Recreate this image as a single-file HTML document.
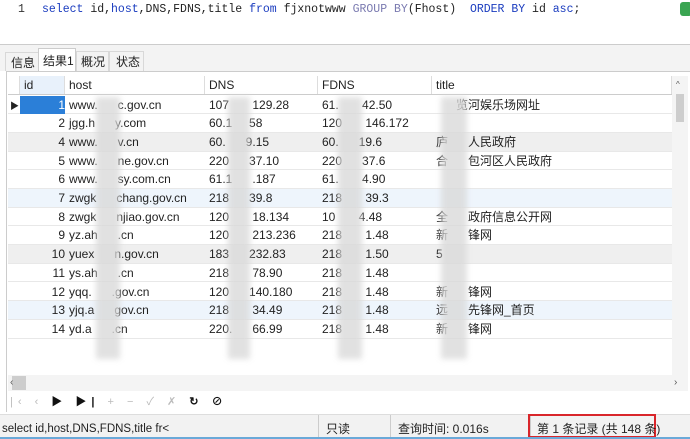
<!DOCTYPE html>
<html><head><meta charset="utf-8"><style>
*{margin:0;padding:0;box-sizing:border-box}
body{width:690px;height:439px;overflow:hidden;background:#fff;font-family:"Liberation Sans","Noto Sans CJK SC",sans-serif;font-size:12px;line-height:14px;color:#222;position:relative}
.a{position:absolute;white-space:nowrap}
.mono{font-family:"Liberation Mono",monospace;font-size:11.5px}
.row{position:absolute;left:8px;width:664px;height:18.7px;border-bottom:1px solid #e8e8e8}
.row span{position:absolute;top:2px;white-space:pre;line-height:14px}
.c{position:absolute;top:76px;height:19px;border-right:1px solid #ddd;background:#fff;padding:2px 0 0 4px}
.blur{position:absolute;background:#dadada;filter:blur(3px);opacity:.8}
</style></head><body>
<div class="a mono" style="left:18px;top:3px;color:#333">1</div>
<div class="a mono" style="left:42px;top:3px;color:#222;white-space:pre"><span style="color:#1a3cbf">select</span> id,<span style="color:#1a3cbf">host</span>,DNS,FDNS,title <span style="color:#1a3cbf">from</span> fjxnotwww <span style="color:#7a7ab0">GROUP BY</span>(Fhost)  <span style="color:#1a3cbf">ORDER BY</span> id <span style="color:#1a3cbf">asc</span>;</div>
<div class="a" style="left:680px;top:2px;width:12px;height:14px;background:#3aa552;border-radius:3px"></div>
<div class="a" style="left:0;top:44px;width:690px;height:1px;background:#ccc"></div>
<div class="a" style="left:0;top:45px;width:690px;height:26px;background:#f3f3f3"></div>
<div class="a" style="left:5px;top:52px;width:34px;height:19px;border:1px solid #d8d8d8;border-bottom:none;padding:3px 0 0 5px">信息</div>
<div class="a" style="left:38px;top:48px;width:38px;height:23px;background:#fff;border:1px solid #ccc;border-bottom:none;padding:5px 0 0 4px">结果1</div>
<div class="a" style="left:76px;top:51px;width:33px;height:20px;border:1px solid #d8d8d8;border-bottom:none;padding:3px 0 0 4px">概况</div>
<div class="a" style="left:109px;top:51px;width:35px;height:20px;border:1px solid #d8d8d8;border-bottom:none;padding:3px 0 0 6px">状态</div>
<div class="a" style="left:6px;top:71px;width:684px;height:1px;background:#ccc"></div>
<div class="a" style="left:6px;top:72px;width:1px;height:340px;background:#ccc"></div>
<div class="c" style="left:8px;width:12px;padding:0"></div>
<div class="c" style="left:20px;width:45px;background:#e8f1fb">id</div>
<div class="c" style="left:65px;width:140px">host</div>
<div class="c" style="left:205px;width:113px">DNS</div>
<div class="c" style="left:318px;width:114px">FDNS</div>
<div class="c" style="left:432px;width:240px">title</div>
<div class="a" style="left:8px;top:94px;width:664px;height:1px;background:#ccc"></div>
<div class="a" style="left:672px;top:76px;width:16px;height:300px;background:#f4f4f4"></div>
<div class="a" style="left:676px;top:94px;width:8px;height:28px;background:#cdcdcd"></div>
<div class="a" style="left:676px;top:78px;font-size:8px;color:#555">^</div>
<div id="rows"></div>
<script>
var d=[["1","www.      c.gov.cn","107       129.28","61.       42.50","      览河娱乐场网址"],
["2","jgg.h      y.com","60.1     58","120       146.172",""],
["4","www.      v.cn","60.      9.15","60.      19.6","庐      人民政府"],
["5","www.      ne.gov.cn","220      37.10","220      37.6","合      包河区人民政府"],
["6","www.      sy.com.cn","61.1      .187","61.       4.90",""],
["7","zwgk      chang.gov.cn","218      39.8","218       39.3",""],
["8","zwgk      njiao.gov.cn","120       18.134","10       4.48","全      政府信息公开网"],
["9","yz.ah      .cn","120       213.236","218       1.48","新      锋网"],
["10","yuex      n.gov.cn","183      232.83","218       1.50","5"],
["11","ys.ah      .cn","218       78.90","218       1.48",""],
["12","yqq.      .gov.cn","120      140.180","218       1.48","新      锋网"],
["13","yjq.a      gov.cn","218       34.49","218       1.48","远      先锋网_首页"],
["14","yd.a      .cn","220.      66.99","218       1.48","新      锋网"]];
var h="",xs=[57,69,209,322,436];
d.forEach(function(r,i){var t=95.5+i*18.7;var bg=i==2||i==8?"#efefef":(i==5||i==11?"#eef5fc":"#fff");
h+='<div class="row" style="top:'+t+'px;background:'+bg+'">';
if(i==0)h+='<div style="position:absolute;left:12px;top:0;width:45px;height:18px;background:#2b7fd8"></div><span style="left:2px;font-size:9px;top:3px">▶</span>';
h+='<span style="right:'+(664-57)+'px;'+(i==0?'color:#fff':'')+'">'+r[0]+'</span>';
for(var k=1;k<5;k++)h+='<span style="left:'+(xs[k]-8)+'px">'+r[k]+'</span>';
h+='</div>';});
h+='<div class="blur" style="left:96px;top:97px;width:24px;height:262px"></div>';
h+='<div class="blur" style="left:228px;top:97px;width:22px;height:262px"></div>';
h+='<div class="blur" style="left:338px;top:97px;width:24px;height:262px"></div>';
h+='<div class="blur" style="left:441px;top:97px;width:26px;height:262px"></div>';
document.getElementById("rows").innerHTML=h;
</script>
<div class="a" style="left:8px;top:375px;width:680px;height:16px;background:#f4f4f4"></div>
<div class="a" style="left:12px;top:376px;width:14px;height:14px;background:#cdcdcd"></div>
<div class="a" style="left:10px;top:376px;font-size:10px;color:#555">‹</div>
<div class="a" style="left:674px;top:376px;font-size:10px;color:#555">›</div>
<div class="a" style="left:10px;top:395px;font-size:11px;color:#bbb;letter-spacing:5px">|‹ ‹ <b style="color:#111">▶ ▶|</b> + − ✓ ✗ <b style="color:#111">↻ ⊘</b></div>
<div class="a" style="left:0;top:414px;width:690px;height:1px;background:#ddd"></div>
<div class="a" style="left:0;top:415px;width:690px;height:24px;background:#f2f2f2"></div>
<div class="a" style="left:2px;top:422px;font-size:11.5px">select id,host,DNS,FDNS,title fr&lt;</div>
<div class="a" style="left:318px;top:415px;width:1px;height:24px;background:#ccc"></div>
<div class="a" style="left:326px;top:422px">只读</div>
<div class="a" style="left:390px;top:415px;width:1px;height:24px;background:#ccc"></div>
<div class="a" style="left:398px;top:422px">查询时间: 0.016s</div>
<div class="a" style="left:530px;top:415px;width:1px;height:24px;background:#ccc"></div>
<div class="a" style="left:528px;top:414px;width:128px;height:24px;border:2px solid #d9262b"></div>
<div class="a" style="left:537px;top:422px">第 1 条记录 (共 148 条)</div>
<div class="a" style="left:0;top:437px;width:690px;height:2px;background:#6aa9d8"></div>
</body></html>
